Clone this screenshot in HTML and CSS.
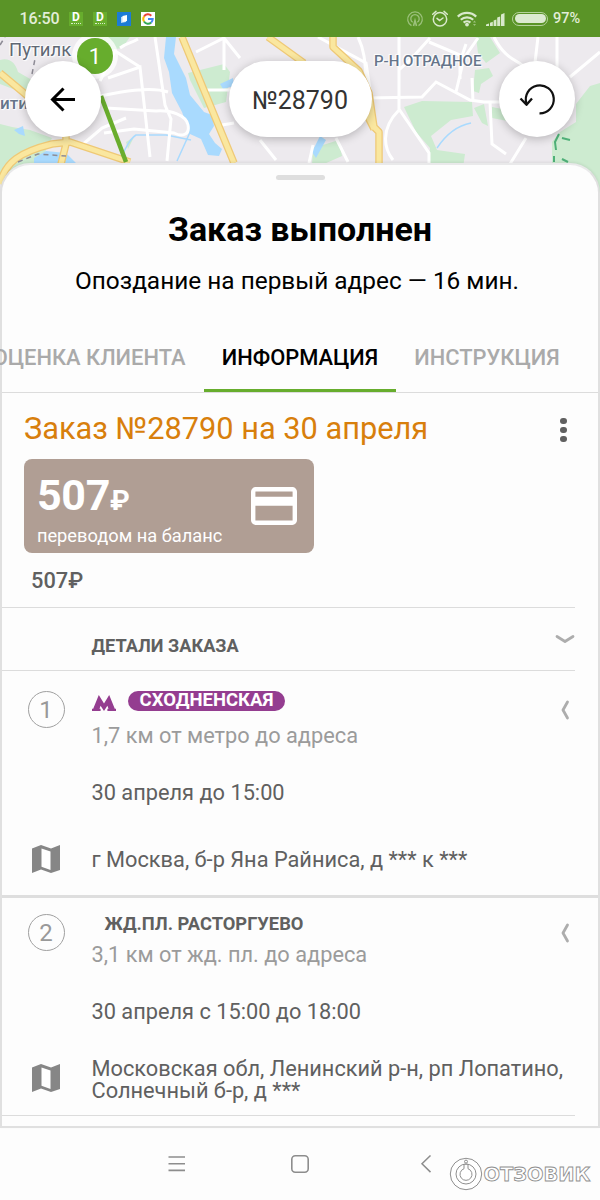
FILE: index.html
```html
<!DOCTYPE html>
<html lang="ru">
<head>
<meta charset="utf-8">
<title>Заказ №28790</title>
<link rel="stylesheet" href="styles.css">
</head>
<body>
<header class="status">
  <span class="clock">16:50</span>
  <span class="notif notif-d"><b>D</b><i></i></span>
  <span class="notif notif-d"><b>D</b><i></i></span>
  <svg class="notif" viewBox="0 0 14 14"><rect width="14" height="14" fill="#1c7cd6"/><path d="M4 5l5-1v6l-5 1z" fill="#b9dcf8"/><path d="M5.500 4l4.500-1v6l-4.500 1z" fill="#fff"/></svg>
  <svg class="notif" viewBox="0 0 14 14"><rect width="14" height="14" fill="#fff"/><g fill="none" stroke-width="2"><path d="M3 4.500A4.700 4.700 0 0 1 10.300 3.700" stroke="#ea4335"/><path d="M3 4.500A4.700 4.700 0 0 0 3 9.500" stroke="#fbbc05"/><path d="M3 9.500A4.700 4.700 0 0 0 10.200 10.400" stroke="#34a853"/><path d="M7 7h4.700A4.700 4.700 0 0 1 10.200 10.400" stroke="#4285f4"/></g></svg>
  <svg class="sys" viewBox="405 6 107 24">
    <g fill="none" stroke="#9cc17c" stroke-width="1.300"><path d="M411.500 24.600A7.300 7.300 0 1 1 418.500 24.600"/><path d="M412.700 21.300A4.200 4.200 0 1 1 417.300 21.300"/><path d="M413.500 25l1.500-5.500 1.500 5.500" stroke-width="1.600"/></g>
    <g fill="none" stroke="#d9e9cc" stroke-width="1.500" stroke-linecap="round"><circle cx="440" cy="18.300" r="6.700"/><path d="M437 17.400l2.600 2.200 3.400-2.600M432.700 13.200l3.300-2.800M447.300 13.200l-3.300-2.800"/></g>
    <g fill="none" stroke="#d9e9cc" stroke-width="2.200"><path d="M457.800 15.600a13 13 0 0 1 18.400 0"/><path d="M460.800 18.800a9 9 0 0 1 12.400 0"/><path d="M463.600 21.600a5 5 0 0 1 6.800 0"/></g><circle cx="467" cy="23.600" r="1.900" fill="#d9e9cc"/><path d="M473 21.500l1.500-2 1.500 2zM473 23l1.500 2 1.500-2z" fill="#9cc17c"/>
    <path d="M486 25v-1.500l3-1V25zM490 25v-3.200l2.800-1V25zM493.600 25v-5.500l2.800-1V25zM497.200 25v-8.500l3-1V25zM501 25V13.500l3.500-1.500V25z" fill="#d9e9cc"/>
  </svg>
  <span class="battery"><i></i></span>
  <span class="percent">97%</span>
</header>

<section class="map">
  <svg class="map-canvas" viewBox="0 37 600 165">
    <rect y="37" width="600" height="165" fill="#edeaee"/>
    <g fill="#cdebd0">
      <path d="M0 60c10-3 16 4 18 12l14 8-6 14L0 84zM0 124l12 3 18 3 22 8-10 20-22 16-20 2z"/>
      <path d="M96 37h34l-8 11-20 3zM188 73l36-9 6 8-4 30-22 6-14-28zM404 107l18-6 50 1 1 14-22 4-20 16 6 14 28 4-2 14h-34l1-20-14-16zM474 108l10-4 4 22-6-3zM492 107l20 4v11l-20-4zM476 37h14l10 16-14 10-8-10zM475 70l14-2 4 8-12 8-2 9-6-2z"/>
      <path d="M576 104l14-18 10-3v119h-48v-60l8-10 16-10zM313 148l26-8 3 16-18 8h-12zM126 142l8-5-6 12z"/>
    </g>
    <g fill="#a9dafe">
      <path d="M166 37h10l-2 17 12 24 4 17 14 17 8 3 2 11-5 8 6 9 7 6-3 7-11-1-7-16-11-5-8-22-10-19-3-21-5-14z"/>
      <path d="M220 84l13-6 1 8-11 3zM14 130l9-4 2 10-6-2zM312 152l8-16 6 4-10 18zM34 158l12-7 20 2 10 10H34z"/>
    </g>
    <g fill="none" stroke="#a9dafe" stroke-width="1.500"><path d="M118 158c8-4 8-17 18-23h30l25 5M191 130l-14 31M437 148c8-12 18-22 34-25"/></g>
    <g fill="none" stroke="#fff" stroke-width="3">
      <path d="M120 48c8-6 10-4 18-9M155 37l10 68 6 14-4 42M108 78l32-11 10 90M100 96c20-4 50-10 68-4M106 108l50 3c15-1 30 4 32 14s-6 12-14 8l-40-4-30 4M140 67l-25-16-15 30M82 145l20-17 24-10M196 52l28-14 16 20M224 40v30M205 90h30M260 140l16 20"/>
      <path d="M318 37l48 26 6 40M368 98l54-1 14-15 34 18 14 2h20M399 37v72l30 44v10M399 110c-20 20-14 40-6 50M429 42l33 14 4-12M460 55v24M472 78l1 24M456 92l8-34 14-20M430 38l-18 20-13 12M358 37c10 20 6 40 10 60M490 102l2 42 14 10M494 37c10 20 20 22 28 28M538 37l-4 34M557 37v40M600 52l-30 25M526 138l-16 26M313 145l-4 18M336 138l12 24M222 125l12-2"/>
    </g>
    <g fill="none" stroke-linejoin="round">
      <path d="M0 73l30 25M0 184c5-22 20-32 52-40l18-2 60 20M66 120v24l-5 20M182 37l52 126M268 37l36 26M333 37v10l26 24 10 22 5 34 5 5v31M362 105l12 24" stroke="#efc976" stroke-width="7.500"/>
      <path d="M0 73l30 25M0 184c5-22 20-32 52-40l18-2 60 20M66 120v24l-5 20M182 37l52 126M268 37l36 26M333 37v10l26 24 10 22 5 34 5 5v31M362 105l12 24" stroke="#fae79f" stroke-width="5"/>
    </g>
    <path d="M18 162l20-8 28 2M0 45l5-8M32 74l4-20" fill="none" stroke="#8e8c96" stroke-width="1.500" stroke-dasharray="5 4"/>
    <path d="M559 134l-4 8 1 8M562 138l8 2M554 156v6M562 159l6 3" stroke="#4fb078" stroke-width="2" fill="none"/>
    <path d="M101 96l25 66" stroke="#69ad2d" stroke-width="4.500"/>
  </svg>
  <span class="place place-putilkovo">Путилк</span>
  <span class="place place-mitino">ити</span>
  <span class="place place-otradnoe">Р-Н ОТРАДНОЕ</span>
  <span class="pin">1</span>
  <div class="toolbar">
    <button class="round"><svg viewBox="0 0 76 76"><path d="M50 38.500H27.500M38.500 27.500l-11 11 11 11" fill="none" stroke="#000" stroke-width="3"/></svg></button>
    <div class="order-no">№28790</div>
    <button class="round"><svg viewBox="499 61 76 76"><path d="M526.400 103.500A14 14 0 1 1 539.500 113.400" fill="none" stroke="#111" stroke-width="2.200"/><path d="M520.500 98.500l6 6.300 5.500-6.300" fill="none" stroke="#111" stroke-width="2.300" stroke-linejoin="round"/></svg></button>
  </div>
</section>

<main class="sheet">
  <div class="handle"></div>
  <h1 class="title"><span>Заказ выполнен</span></h1>
  <p class="subtitle"><span>Опоздание на первый адрес — 16 мин.</span></p>
  <nav class="tabs">
    <a class="tab tab-first">ОЦЕНКА КЛИЕНТА</a>
    <a class="tab tab-active">ИНФОРМАЦИЯ</a>
    <a class="tab tab-last">ИНСТРУКЦИЯ</a>
  </nav>
  <div class="order-head">
    <h2>Заказ №28790 на 30 апреля</h2>
    <span class="dots"><i></i><i></i><i></i></span>
  </div>
  <div class="pay">
    <div class="pay-text">
      <div class="sum">507<small>₽</small></div>
      <div class="method">переводом на баланс</div>
    </div>
    <svg class="card-icon" viewBox="0 0 46 38"><rect x="2.200" y="2.200" width="41.600" height="33.600" rx="2.500" fill="none" stroke="#fff" stroke-width="4.400"/><path d="M2 9.700h42v9H2z" fill="#fff"/></svg>
  </div>
  <div class="total">507₽</div>
  <div class="details">
    <span>ДЕТАЛИ ЗАКАЗА</span>
    <svg class="chev-down" viewBox="0 0 20 10"><path d="M2 2.500l8 5 8-5" fill="none" stroke="#adadad" stroke-width="2.800" stroke-linecap="round" stroke-linejoin="round"/></svg>
  </div>

  <article class="stop stop-one">
    <div class="num">1</div>
    <div class="where">
      <div class="station">
        <svg class="metro" viewBox="0 0 24 16"><path d="M0 13.800h1.200L6.800 0 12 8.500 17.200 0l5.600 13.800H24V16h-8.600v-2.200h1.100l-1.100-3L12 16l-3.400-5.200-1.100 3h1.100V16H0z" fill="#943d90"/></svg>
        <span class="badge">СХОДНЕНСКАЯ</span>
      </div>
      <div class="distance">1,7 км от метро до адреса</div>
    </div>
    <svg class="chev-left" viewBox="0 0 10 20"><path d="M7.500 2L3 10l4.500 8" fill="none" stroke="#adadad" stroke-width="2.800" stroke-linecap="round" stroke-linejoin="round"/></svg>
    <div class="when">30 апреля до 15:00</div>
    <svg class="map-icon" viewBox="0 0 28 28"><path d="M0 3.500L9 0l10 3.500L28 0v25l-9 3-10-3.500L0 28z" fill="#868686"/><path d="M9.500 3.500l9 3v18.500l-9-3.300z" fill="#fff"/></svg>
    <div class="address"><span>г Москва, б-р Яна Райниса, д *** к ***</span></div>
  </article>

  <article class="stop stop-two">
    <div class="num">2</div>
    <div class="where">
      <div class="station rail">ЖД.ПЛ. РАСТОРГУЕВО</div>
      <div class="distance">3,1 км от жд. пл. до адреса</div>
    </div>
    <svg class="chev-left" viewBox="0 0 10 20"><path d="M7.500 2L3 10l4.500 8" fill="none" stroke="#adadad" stroke-width="2.800" stroke-linecap="round" stroke-linejoin="round"/></svg>
    <div class="when">30 апреля с 15:00 до 18:00</div>
    <svg class="map-icon" viewBox="0 0 28 28"><path d="M0 3.500L9 0l10 3.500L28 0v25l-9 3-10-3.500L0 28z" fill="#868686"/><path d="M9.500 3.500l9 3v18.500l-9-3.300z" fill="#fff"/></svg>
    <div class="address"><span>Московская обл, Ленинский р-н, рп Лопатино,<br>Солнечный б-р, д ***</span></div>
  </article>
</main>

<footer class="sysnav">
  <svg viewBox="168 1155 18 18"><path d="M168.500 1157h16.500M168.500 1163.700h16.500M168.500 1170.400h16.500" stroke="#8d8d8d" stroke-width="1.600"/></svg>
  <svg viewBox="291 1155 18 18"><rect x="291.800" y="1155.800" width="16.400" height="16.400" rx="3.500" fill="none" stroke="#8d8d8d" stroke-width="1.600"/></svg>
  <svg viewBox="417 1155 18 18"><path d="M430.500 1155.500l-8.500 8.300 8.500 8.300" fill="none" stroke="#8d8d8d" stroke-width="1.500"/></svg>
  <div class="watermark">
    <svg viewBox="449 1157 34 34"><g fill="#fff" stroke="#8f8f8f" stroke-width="1"><circle cx="466" cy="1174" r="15.700"/><circle cx="466" cy="1174" r="10"/><path d="M464 1168.700a6 6 0 1 0 4 0v-4.400h-4z"/><circle cx="466" cy="1161.600" r="1.500"/></g></svg>
    <svg class="wordmark" viewBox="0 0 112 24"><text x="0.500" y="19" textLength="107" lengthAdjust="spacingAndGlyphs">ОТЗОВИК</text></svg>
  </div>
</footer>
</body>
</html>
```

FILE: styles.css
```css
* { box-sizing: border-box; }
body {
  margin: 0;
  width: 600px;
  height: 1200px;
  overflow: hidden;
  background: #fdfdfd;
  font-family: Roboto, "Liberation Sans", sans-serif;
  color: #606060;
}
h1, h2, p { margin: 0; font-weight: 400; }
svg { display: block; flex: none; }
span, h2, div { white-space: nowrap; }

.status {
  display: flex;
  align-items: center;
  height: 37px;
  padding-left: 19.500px;
  background: #5a9427;
  color: #e2eed8;
}
.clock { width: 49.500px; font-size: 16px; font-weight: 500; letter-spacing: -0.1px; }
.notif { width: 14px; height: 14px; margin-right: 10px; flex: none; }
.notif-d { display: flex; flex-direction: column; align-items: center; background: #67ad2d; color: #fff; }
.notif-d b { font-size: 12px; line-height: 11px; }
.notif-d i { width: 10px; height: 0; border-top: 1.500px dotted #d9ecc9; }
.sys { width: 107px; height: 24px; margin-left: 240px; }
.battery { width: 36px; height: 14px; border: 1px solid #b5d29c; border-radius: 7px; padding: 1.500px; margin-right: 5px; }
.battery i { display: block; height: 9px; border-radius: 5px; background: #dcead1; }
.percent { font-size: 14.500px; font-weight: 500; }

.map { position: relative; height: 126px; clip-path: inset(0 0 -40px 0); }
.map-canvas { position: absolute; left: 0; top: 0; width: 600px; height: 165px; }
.place {
  position: absolute;
  color: #66758a;
  text-shadow: 0 0 2px #fff, 0 0 2px #fff, 1px 1px 1px #fff, -1px -1px 1px #fff;
}
.place-putilkovo { left: 9px; top: 3px; font-size: 18.500px; line-height: 20px; color: #606874; }
.place-mitino { left: 0; top: 56px; font-size: 17px; line-height: 20px; font-weight: 500; }
.place-otradnoe { left: 374px; top: 14px; font-size: 15px; line-height: 20px; font-weight: 500; }
.toolbar {
  position: relative;
  display: flex;
  justify-content: space-between;
  padding: 24px 25px 0;
}
.round, .order-no {
  height: 76px;
  border: 0;
  padding: 0;
  border-radius: 38px;
  background: #fff;
  box-shadow: 0 2px 10px rgba(0, 0, 0, 0.24);
}
.round { width: 76px; }
.round svg { width: 76px; height: 76px; }
.order-no {
  width: 143px;
  font-size: 25px;
  line-height: 79px;
  text-align: center;
  color: #333;
}
.pin {
  position: absolute;
  left: 77px;
  top: 1px;
  width: 36px;
  height: 36px;
  border-radius: 50%;
  background: #67ad2d;
  color: #fff;
  font-size: 22px;
  line-height: 37px;
  text-align: center;
  box-shadow: 0 0 0 5px rgba(255, 255, 255, 0.75);
}

.sheet {
  position: relative;
  height: 965px;
  border: 2px solid #e0e0e0;
  border-top-color: #e9e9ea;
  border-radius: 30px 30px 0 0;
  background: #fdfdfd;
  box-shadow: 0 -1px 3px rgba(0, 0, 0, 0.08);
  display: flow-root;
}
.handle { width: 49px; height: 5px; margin: 10px auto 0; border-radius: 3px; background: #dedede; }
.title { height: 62px; padding-top: 18px; font-size: 34px; line-height: 62px; font-weight: 700; color: #000; text-align: center; }
.subtitle { height: 50px; padding: 14px 6px 0 0; font-size: 24.400px; line-height: 50px; color: #000; text-align: center; }
.tabs {
  display: flex;
  height: 101px;
  align-items: flex-end;
  border-bottom: 1px solid #dcdcdc;
  font-size: 21.900px;
  font-weight: 500;
  color: #aaa;
}
.tab { height: 49px; line-height: 30px; text-align: center; white-space: nowrap; flex: none; }
.tab-first { width: 202px; direction: rtl; padding-right: 18.500px; }
.tab-active { width: 192px; color: #000; border-bottom: 3px solid #67ad2d; }
.tab-last { width: 182px; }
.order-head { display: flex; justify-content: space-between; padding: 14px 31.500px 0 22px; height: 66px; color: #d87f0c; }
.order-head h2 { font-size: 30.750px; line-height: 43px; }
.dots { display: flex; flex-direction: column; gap: 3px; padding-top: 10.500px; }
.dots i { width: 6.200px; height: 6.200px; border-radius: 50%; background: #606060; }
.pay {
  display: flex;
  justify-content: space-between;
  width: 289.500px;
  height: 94px;
  margin-left: 22.400px;
  padding: 0 17px 0 12.500px;
  border-radius: 8px;
  background: #b09e94;
  color: #fff;
}
.sum { height: 66px; padding-top: 10px; font-size: 43px; line-height: 52px; font-weight: 700; letter-spacing: -0.3px; }
.sum small { font-size: 28px; }
.method { font-size: 18.250px; line-height: 22px; }
.card-icon { width: 46px; height: 38px; margin-top: 28px; }
.total { height: 54px; padding-left: 29px; font-size: 21.800px; line-height: 55px; font-weight: 500; }
.details {
  display: flex;
  justify-content: space-between;
  align-items: flex-start;
  width: 573px;
  height: 64px;
  border: solid #dcdcdc;
  border-width: 1px 0;
  padding-left: 89.500px;
  font-size: 18.150px;
  line-height: 76px;
  font-weight: 700;
}
.chev-down { width: 20px; height: 10px; margin-top: 26px; }

.stop {
  display: grid;
  grid-template-columns: 89.500px 468px 10px;
  align-items: start;
  font-size: 21.780px;
}
.stop-one { grid-template-rows: 96px 53px 75px; height: 227px; border-bottom: 3px solid #dedede; }
.stop-two { grid-template-rows: 88px 53px 76px; height: 218px; width: 573px; border-bottom: 1px solid #dcdcdc; }
.num {
  width: 37px;
  height: 37px;
  margin: 20px 0 0 25.500px;
  border: 1.500px solid #a0a0a0;
  border-radius: 50%;
  font-size: 24px;
  line-height: 37px;
  text-align: center;
  color: #999;
}
.stop-two .num { margin-top: 16px; }
.station { display: flex; align-items: flex-start; height: 20px; margin-top: 20px; }
.metro { width: 24px; height: 16px; margin-top: 4px; }
.badge {
  width: 157px;
  height: 20px;
  margin-left: 12.500px;
  border-radius: 10px;
  background: #943d90;
  color: #fff;
  font-size: 18.500px;
  line-height: 19px;
  font-weight: 700;
  text-align: center;
}
.rail { margin-top: 16px; padding-left: 13px; font-size: 18.300px; line-height: 20px; font-weight: 700; }
.distance { margin-top: 12px; line-height: 25px; color: #9b9b9b; }
.stop-two .distance { margin-top: 9px; line-height: 24px; }
.chev-left { width: 10px; height: 20px; margin-top: 29px; }
.stop-two .chev-left { margin-top: 25px; }
.when { grid-column: 2; grid-row: 2; line-height: 52px; }
.map-icon { width: 28px; height: 28px; margin: 25px 0 0 30px; grid-row: 3; }
.address { grid-column: 2 / 4; grid-row: 3; display: flex; align-items: center; height: 79px; line-height: 22px; }
.stop-two .address { height: 81px; }

.sysnav {
  position: relative;
  display: grid;
  grid-template-columns: 123px 126px 18px;
  height: 72px;
  padding: 27px 0 0 168px;
}
.sysnav > svg { width: 18px; height: 18px; }
.watermark { position: absolute; left: 449px; top: 29px; display: flex; align-items: center; }
.watermark svg { width: 34px; height: 34px; }
.watermark .wordmark { width: 112px; height: 24px; }
.wordmark text { font-family: "DejaVu Sans", sans-serif; font-size: 20px; font-weight: 700; fill: #fff; stroke: #8f8f8f; stroke-width: 0.900px; }
```
